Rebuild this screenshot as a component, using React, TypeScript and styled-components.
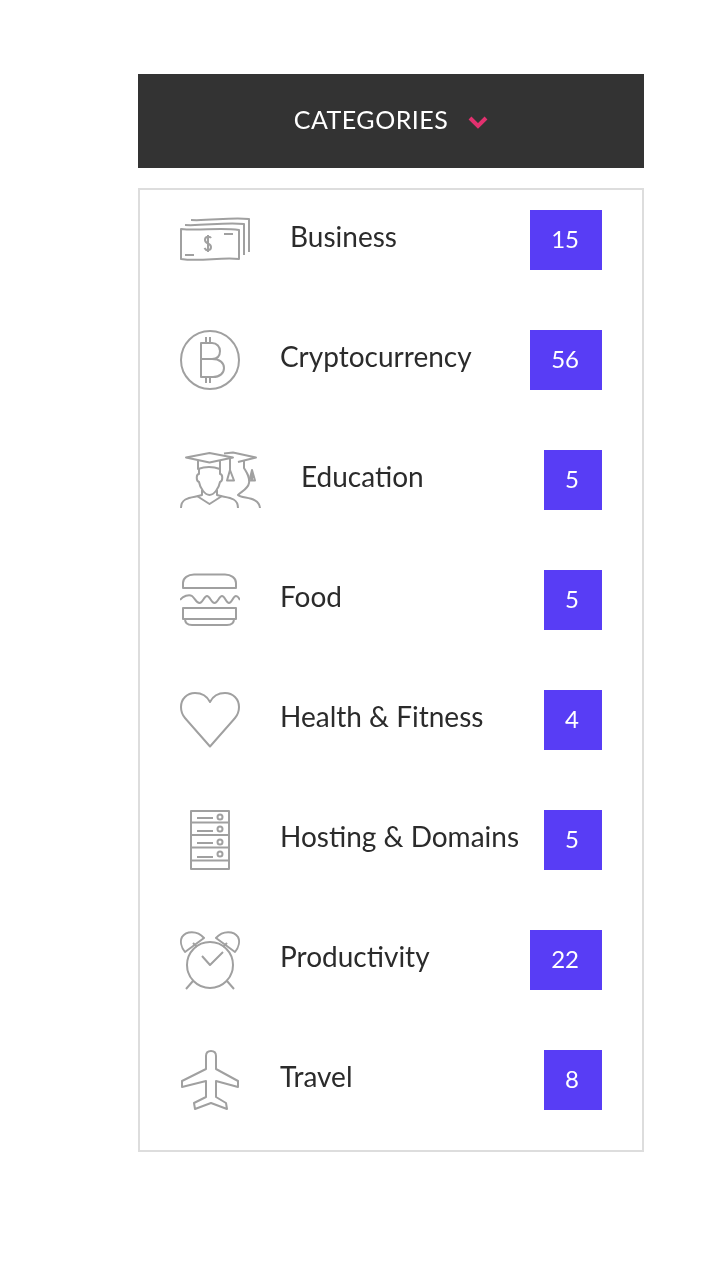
import { ReactNode } from "react";
import styled, { createGlobalStyle } from "styled-components";

const GlobalStyle = createGlobalStyle`
    body {
        margin: 0;
        background-color: #FFFFFF;
        font-family: "Lato", "Liberation Sans", sans-serif;
    }
`;

const Page = styled.div`
    width: 506px;
    height: 1278px;
    box-sizing: border-box;
    padding-top: 74px;
    margin-left: 138px;
    will-change: transform;
`;

const Heading = styled.div`
    height: 94px;
    display: flex;
    justify-content: center;
    align-items: center;
    gap: 20px;
    background-color: #333333;
`;

const HeadingText = styled.h2`
    margin: -4px 0 0;
    font-size: 25px;
    font-weight: 400;
    letter-spacing: 0.5px;
    color: #FFFFFF;
`;

const Chevron = styled.svg`
    width: 20px;
    height: 13px;
    margin-top: 3px;
    fill: none;
    stroke: #E2316F;
    stroke-width: 4;
`;

const List = styled.ul`
    display: flex;
    flex-direction: column;
    gap: 60px;
    margin: 20px 0 0;
    padding: 20px 40px 40px;
    border: 2px solid #DDDDDD;
    list-style: none;
`;

const Row = styled.li`
    height: 60px;
    display: flex;
    align-items: flex-start;
`;

const Icon = styled.svg`
    flex-shrink: 0;
    height: 60px;
    margin-right: 40px;
    fill: none;
    stroke: #A0A0A0;
    stroke-width: 2;
    stroke-linejoin: round;
`;

const Label = styled.span`
    font-size: 28px;
    line-height: 52px;
    color: #2B2B2B;
`;

const Count = styled.span`
    height: 60px;
    margin-left: auto;
    padding: 0 23px 0 21px;
    font-size: 24px;
    line-height: 58px;
    color: #FFFFFF;
    background-color: #583DF5;
`;

type Category = {
    name: string;
    count: number;
    iconWidth: number;
    icon: ReactNode;
};

const categories: Category[] = [
    {
        name: "Business",
        count: 15,
        iconWidth: 70,
        icon: (
            <>
                <path d="M1 19C20 21 40 17 59 20V49C40 47 20 52 1 49Z" />
                <path d="M5 15C24 16 44 12 64 14V45" />
                <path d="M11 10C30 11 50 7 69 9V42" />
                <path d="M44 24H53M5 45H14" />
                <path d="M31 28C30 26 25 26 25 30C25 34 31 33 31 37C31 41 26 41 24.5 38M28 25V42" />
            </>
        ),
    },
    {
        name: "Cryptocurrency",
        count: 56,
        iconWidth: 60,
        icon: (
            <>
                <circle cx="30" cy="30" r="29" />
                <path d="M21 13H32C37 13 40 17 40 21C40 26 37 29 32 29C40 29 44 33 44 38C44 43 40 47 33 47H21Z" />
                <path d="M21 29H32" />
                <path d="M26 7V13M30 7V13M26 47V53M30 47V53" />
            </>
        ),
    },
    {
        name: "Education",
        count: 5,
        iconWidth: 81,
        icon: (
            <>
                <path d="M6 7.5L29.5 3L53 7.5L29.5 12.5Z" />
                <path d="M18 11V19C25 16.5 33 16.5 40 19V11" />
                <path d="M50 8V20M47 30.5L50 20L54 30.5Z" />
                <path d="M19 18V24C16 24 16 31 19 32C20 38 25 45 29.5 45C34 45 39 38 40 32C43 31 43 24 40 24V18" />
                <path d="M22 40V45C14 48 1 46 1 58M37 40V45C45 48 58 46 58 58" />
                <path d="M17 46L29.5 54L42 46" />
                <path d="M44 3.5L53 2.5L76 7.5L58 12" />
                <path d="M64 11V18C67 23 70 27 69 33C68 39 62 41 58 45C62 49 79 46 80 58" />
                <path d="M72 20V30M69.5 30.5L72 20L75 30.5Z" />
            </>
        ),
    },
    {
        name: "Food",
        count: 5,
        iconWidth: 60,
        icon: (
            <>
                <path d="M3 18V13C3 8 8 4.5 14 4.5H45C51 4.5 56 8 56 13V18Z" />
                <path d="M0 30C3 26 9 24 12 26C15 28 16 33 19.5 33C23 33 24 26 27 26C30 26 31 33 34.5 33C38 33 39 26 42 26C45 26 46 33 49 33C52 33 53 26 56 26C58 26 59 28 60 30" />
                <path d="M3 38H56V49H3Z" />
                <path d="M5 49C5 53 8 55 12 55H47C51 55 54 53 54 49" />
            </>
        ),
    },
    {
        name: "Health & Fitness",
        count: 4,
        iconWidth: 60,
        icon: (
            <path d="M30 56.5L5 28C2 24.5 1 21 1 17C1 9 7 3 15 3C21 3 27 6 30 12C33 6 39 3 45 3C53 3 59 9 59 17C59 21 58 24.5 55 28Z" />
        ),
    },
    {
        name: "Hosting & Domains",
        count: 5,
        iconWidth: 60,
        icon: (
            <>
                <path d="M11 1H49V59H11Z" />
                <path d="M11 12.5H49M11 25H49M11 37.5H49M11 50.5H49" />
                <path d="M17 8H33M17 21H33M17 33H33M17 47H33" />
                <circle cx="40" cy="7" r="2.5" />
                <circle cx="40" cy="19" r="2.5" />
                <circle cx="40" cy="32" r="2.5" />
                <circle cx="40" cy="44" r="2.5" />
            </>
        ),
    },
    {
        name: "Productivity",
        count: 22,
        iconWidth: 60,
        icon: (
            <>
                <circle cx="30" cy="35" r="23" />
                <path d="M5 22C1 17 0 11 2 7C6 1 17 0 24 8Z" />
                <path d="M55 22C59 17 60 11 58 7C54 1 43 0 36 8Z" />
                <path d="M13 13L17 17M47 13L43 17" />
                <path d="M22 26L30 35L43 22" />
                <path d="M13 51L6 59M47 51L54 59" />
            </>
        ),
    },
    {
        name: "Travel",
        count: 8,
        iconWidth: 60,
        icon: (
            <path d="M26 6C26 3 28 1 31 1C34 1 36 3 36 6V19L58 31V37L36 31V47L46 53L47 59L31 53L15 59L14 53L26 47V31L2 37V31L26 19Z" />
        ),
    },
];

export default function App() {
    return (
        <>
            <GlobalStyle />
            <Page>
                <Heading>
                    <HeadingText>CATEGORIES</HeadingText>
                    <Chevron viewBox="0 0 20 13">
                        <path d="M2 2L10 10L18 2" />
                    </Chevron>
                </Heading>
                <List>
                    {categories.map((category) => (
                        <Row key={category.name}>
                            <Icon
                                width={category.iconWidth}
                                viewBox={`0 0 ${category.iconWidth} 60`}
                            >
                                {category.icon}
                            </Icon>
                            <Label>{category.name}</Label>
                            <Count>{category.count}</Count>
                        </Row>
                    ))}
                </List>
            </Page>
        </>
    );
}
